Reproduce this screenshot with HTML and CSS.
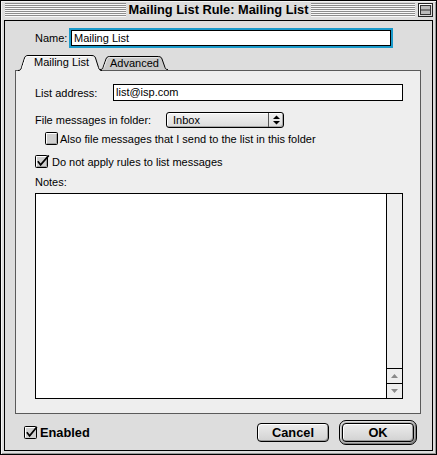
FILE: index.html
```html
<!DOCTYPE html>
<html>
<head>
<meta charset="utf-8">
<link rel="stylesheet" href="styles.css">
</head>
<body>
<div class="window">
  <div class="titlebar">
    <div class="stripes left"></div>
    <div class="title">Mailing List Rule: Mailing List</div>
    <div class="title-right">
      <div class="stripes"></div>
      <svg class="collapse" width="15" height="14" viewBox="0 0 15 14">
        <rect x="0.5" y="0.5" width="14" height="13" fill="#d6d6d6" stroke="#222"/>
        <path d="M1.5 12.5V1.5H13.5" stroke="#fff" fill="none"/>
        <rect x="2.5" y="2.5" width="10" height="9" fill="#bbb" stroke="#333"/>
        <path d="M2.5 7H12.5" stroke="#333"/>
      </svg>
    </div>
  </div>
  <div class="content">
    <div class="name-row">
      <span class="name-label">Name:</span>
      <div class="field focus">Mailing List</div>
    </div>
    <div class="tabs">
      <div class="tab active">
        <svg class="tab-bg" width="84" height="16" viewBox="0 0 84 16">
          <path d="M0 16 C2 16 3 14.5 3.5 12.5 L6.5 3 C7 1.5 8 0.5 10 0.5 L74 0.5 C76 0.5 77 1.5 77.5 3 L80.5 12.5 C81 14.5 82 16 84 16 Z" fill="#eee"/>
          <path d="M0 15.5 C2 15.5 3 14.5 3.5 12.5 L6.5 3 C7 1.5 8 0.5 10 0.5 L74 0.5 C76 0.5 77 1.5 77.5 3 L80.5 12.5 C81 14.5 82 15.5 84 15.5" fill="none" stroke="#000"/>
          <path d="M4.5 12.5 L7.5 3.5 C8 2 9 1.5 10 1.5 L73 1.5" fill="none" stroke="#fff"/>
        </svg>
        <span class="tab-text">Mailing List</span>
      </div>
      <div class="tab inactive">
        <svg class="tab-bg" width="68" height="14" viewBox="0 0 68 14">
          <path d="M0 14 C2 14 2.5 13 3 11.5 L6 3 C6.5 1.5 7.5 0.5 9.5 0.5 L58.5 0.5 C60.5 0.5 61.5 1.5 62 3 L65 11.5 C65.5 13 66 14 68 14 Z" fill="#c9c9c9"/>
          <path d="M0 13.5 C2 13.5 2.5 13 3 11.5 L6 3 C6.5 1.5 7.5 0.5 9.5 0.5 L58.5 0.5 C60.5 0.5 61.5 1.5 62 3 L65 11.5 C65.5 13 66 13.5 68 13.5" fill="none" stroke="#000"/>
          <path d="M4 11.5 L7 3.5 C7.5 2 8.5 1.5 9.5 1.5 L58 1.5" fill="none" stroke="#e6e6e6"/>
        </svg>
        <span class="tab-text">Advanced</span>
      </div>
    </div>
    <div class="pane">
      <div class="row">
        <span class="label addr-label">List address:</span>
        <div class="field addr">list@isp.com</div>
      </div>
      <div class="row popup-row">
        <span class="label folder-label">File messages in folder:</span>
        <div class="popup">
          <span class="popup-text">Inbox</span>
          <span class="popup-arrows">
            <svg width="7" height="10" viewBox="0 0 7 10">
              <path d="M0 4 L3.5 0.5 L7 4Z" fill="#000"/>
              <path d="M0 6 L3.5 9.5 L7 6Z" fill="#000"/>
            </svg>
          </span>
        </div>
      </div>
      <div class="row check-row indent">
        <svg class="cb" width="13" height="13" viewBox="0 0 13 13">
          <rect x="0.5" y="0.5" width="12" height="12" rx="1" fill="#cfcfcf" stroke="#000"/>
          <path d="M1.5 11V1.5H11" stroke="#fff" fill="none"/>
          <path d="M2 11.5H11.5V2" stroke="#a0a0a0" fill="none"/>
        </svg>
        <span class="check-text">Also file messages that I send to the list in this folder</span>
      </div>
      <div class="row check-row checked-row">
        <svg class="cb" width="15" height="13" viewBox="0 0 15 13">
          <rect x="0.5" y="0.5" width="12" height="12" rx="1" fill="#cfcfcf" stroke="#000"/>
          <path d="M1.5 11V1.5H11" stroke="#fff" fill="none"/>
          <path d="M2 11.5H11.5V2" stroke="#a0a0a0" fill="none"/>
          <path d="M2.8 6.2 L5.6 9.8 L13.8 0.4" stroke="#000" stroke-width="1.7" fill="none"/>
        </svg>
        <span class="check-text">Do not apply rules to list messages</span>
      </div>
      <div class="notes-label">Notes:</div>
      <div class="notes">
        <div class="notes-text"></div>
        <div class="scrollbar">
          <div class="track"></div>
          <div class="arrow">
            <svg width="7" height="4" viewBox="0 0 7 4"><path d="M0 4 L3.5 0 L7 4Z" fill="#8a8a8a"/></svg>
          </div>
          <div class="arrow">
            <svg width="7" height="4" viewBox="0 0 7 4"><path d="M0 0 L3.5 4 L7 0Z" fill="#8a8a8a"/></svg>
          </div>
        </div>
      </div>
    </div>
    <div class="footer">
      <div class="enabled">
        <svg class="cb" width="14" height="13" viewBox="0 0 14 13">
          <rect x="0.5" y="0.5" width="12" height="12" rx="1" fill="#cfcfcf" stroke="#000"/>
          <path d="M1.5 11V1.5H11" stroke="#fff" fill="none"/>
          <path d="M2.8 6.2 L5.6 9.8 L12.8 1" stroke="#000" stroke-width="1.7" fill="none"/>
        </svg>
        <span class="enabled-text">Enabled</span>
      </div>
      <div class="buttons">
        <div class="btn cancel">Cancel</div>
        <div class="ok-ring"><div class="btn ok">OK</div></div>
      </div>
    </div>
  </div>
</div>
</body>
</html>
```
FILE: styles.css
```css
* { box-sizing: border-box; margin: 0; padding: 0; }
html, body { width: 437px; height: 455px; overflow: hidden; background: #fff; }
body {
  font-family: "Liberation Sans", Arial, sans-serif;
  font-size: 11px;
  color: #000;
}
.window {
  width: 437px;
  height: 455px;
  border: 1px solid #000;
  background: #dddddd;
  padding: 0 3px 3px;
  display: flex;
  flex-direction: column;
  box-shadow: inset 1px 1px 0 #f4f4f4, inset -1px -1px 0 #9a9a9a;
}
.titlebar {
  height: 19px;
  display: grid;
  grid-template-columns: 1fr auto 1fr;
  align-items: start;
}
.stripes {
  height: 14px;
  margin-top: 2px;
  background: repeating-linear-gradient(to bottom, #8c8c8c 0 1px, #f8f8f8 1px 2px);
}
.stripes.left { margin-left: 1px; }
.title {
  font-weight: bold;
  font-size: 12.8px;
  line-height: 18px;
  padding: 0 3px;
  white-space: nowrap;
}
.title-right {
  display: flex;
  align-items: flex-start;
}
.title-right .stripes { flex: 1; }
.collapse { display: block; margin: 2px 0 0 3px; }

.content {
  flex: 1;
  border: 1px solid #000;
  display: flex;
  flex-direction: column;
}
.name-row {
  margin-top: 9px;
  padding-left: 30px;
  display: flex;
  align-items: center;
  height: 16px;
}
.name-label { width: 36px; }
.field {
  background: #fff;
  border: 1px solid #000;
  height: 16px;
  line-height: 14px;
  padding-left: 2px;
  white-space: nowrap;
}
.field.focus {
  width: 320px;
  box-shadow: 0 0 0 2px #1a9acb;
}

.tabs {
  margin-top: 9px;
  margin-bottom: -1px;
  height: 16px;
  padding-left: 13px;
  display: flex;
  align-items: flex-start;
  position: relative;
  z-index: 2;
}
.tab { position: relative; display: flex; justify-content: center; }
.tab-bg { position: absolute; left: 0; top: 0; display: block; }
.tab-text { position: relative; line-height: 15px; }
.tab.active { width: 84px; height: 16px; z-index: 2; padding-left: 3px; }
.tab.inactive { width: 68px; height: 14px; margin-top: 1px; margin-left: -2px; z-index: 1; }
.tab.inactive .tab-text { line-height: 14px; padding-left: 1px; }

.pane {
  flex: 1;
  margin: 0 11px 0 10px;
  background: #eeeeee;
  border: 1px solid #5a5a5a;
  padding: 13px 17px 14px 19px;
  display: flex;
  flex-direction: column;
  position: relative;
  z-index: 1;
}
.row { display: flex; align-items: center; }
.label { white-space: nowrap; }
.addr-label { width: 78px; }
.field.addr { flex: 1; height: 17px; line-height: 15px; padding-left: 2px; }
.popup-row { margin-top: 11px; }
.folder-label { width: 131px; }
.popup {
  width: 118px;
  height: 16px;
  border: 1px solid #000;
  border-radius: 3px;
  background: linear-gradient(#f2f2f2, #dcdcdc);
  box-shadow: inset 1px 1px 0 #fff, inset -1px -1px 0 #a8a8a8;
  display: flex;
}
.popup-text { flex: 1; padding-left: 6px; line-height: 14px; }
.popup-arrows {
  width: 15px;
  border-left: 1px solid #555;
  display: flex;
  align-items: center;
  justify-content: center;
}
.popup-arrows svg { display: block; }
.check-row { margin-top: 10px; height: 13px; }
.check-row.indent { margin-top: 4px; margin-left: 10px; }
.cb { display: block; flex: none; }
.check-row .check-text { margin-left: 2px; white-space: nowrap; }
.checked-row .check-text { margin-left: 2px; }
.indent .check-text { margin-left: 2px; }
.notes-label { margin-top: 8px; line-height: 12px; }
.notes {
  margin-top: 5px;
  flex: 1;
  border: 1px solid #000;
  display: flex;
  background: #fff;
}
.notes-text { flex: 1; }
.scrollbar {
  width: 16px;
  border-left: 1px solid #000;
  background: #eeeeee;
  display: flex;
  flex-direction: column;
}
.track { flex: 1; }
.arrow {
  height: 15px;
  border-top: 1px solid #000;
  display: flex;
  align-items: center;
  justify-content: center;
}
.arrow svg { display: block; }

.footer {
  height: 36px;
  display: flex;
  align-items: center;
  padding: 0 15px 0 19px;
}
.enabled { display: flex; align-items: center; margin-top: 1px; }
.enabled-text { font-weight: bold; font-size: 12.8px; margin-left: 2px; }
.buttons { margin-left: auto; display: flex; align-items: center; }
.btn {
  height: 19px;
  border: 1px solid #000;
  border-radius: 4px;
  background: linear-gradient(#ececec, #d2d2d2);
  box-shadow: inset 1px 1px 0 #fff, inset -1px -1px 0 #9a9a9a;
  font-weight: bold;
  font-size: 12.8px;
  display: flex;
  align-items: center;
  justify-content: center;
}
.cancel { width: 72px; margin-right: 10px; }
.ok-ring {
  width: 78px;
  height: 25px;
  border: 1px solid #000;
  border-radius: 7px;
  padding: 2px;
  background: #b4b4b4;
  box-shadow: inset 1px 1px 0 #e0e0e0, inset -1px -1px 0 #808080;
}
.ok { width: 100%; }
```
